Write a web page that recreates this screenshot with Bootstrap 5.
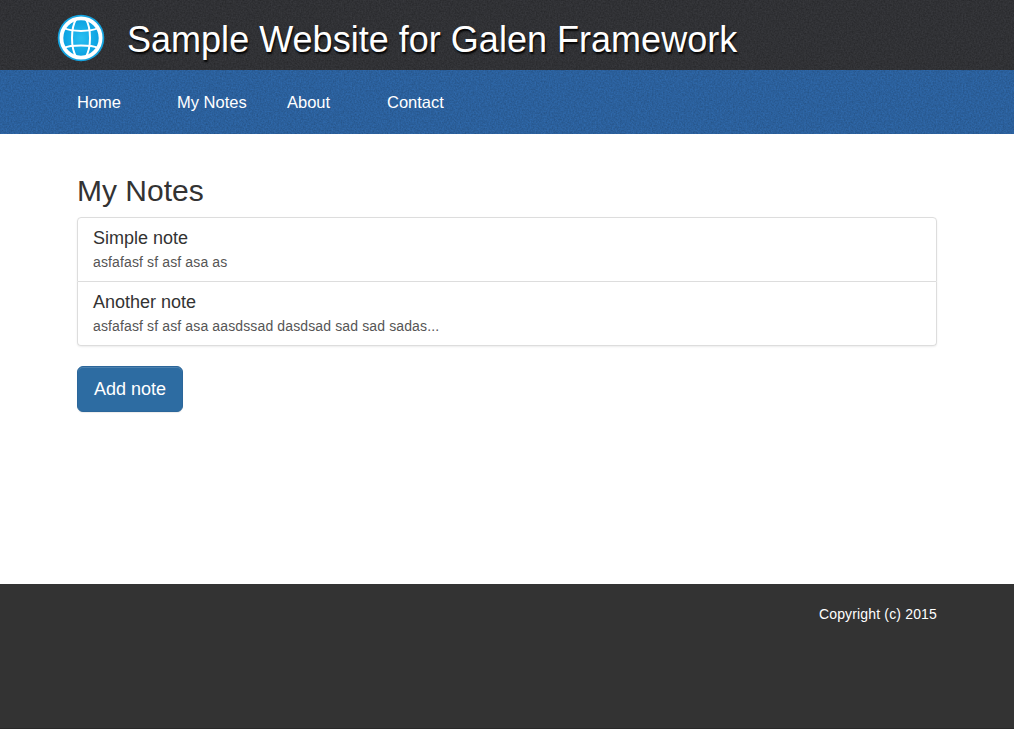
<!DOCTYPE html>
<html lang="en">
<head>
<meta charset="utf-8">
<meta name="viewport" content="width=device-width, initial-scale=1">
<title>Sample Website for Galen Framework</title>
<link href="https://cdn.jsdelivr.net/npm/bootstrap@5.3.0/dist/css/bootstrap.min.css" rel="stylesheet">
<style>
body{font-family:"Liberation Sans",Arial,sans-serif;font-size:14px;line-height:20px;color:#333;background:#fff}
.site-head{height:70px;background-color:#37383c}
.site-menu{height:64px;background-color:#2f68a9}
.grain{position:relative}
.grain>svg.noise{position:absolute;inset:0;width:100%;height:100%;pointer-events:none}
.grain>.inner{position:relative}
.inner{width:900px;margin:0 auto}
.site-head .inner{height:70px}
.logo{width:48px;height:48px;margin:14px 22px 0 0}
.site-title{font-size:36px;line-height:40px;letter-spacing:.02px;color:#fff;text-shadow:1px 2px 2px #000;margin:20px 0 0;font-weight:400;white-space:nowrap}
.site-menu .nav{padding:12px 10px 0}
.site-menu .nav-link{font-size:16.5px;line-height:20px;color:#fff;padding:10px;white-space:nowrap;min-width:100px}
.site-menu .nav-item:nth-child(2) .nav-link{min-width:110px}
.content{min-height:450px;padding:37px 20px 0}
.content h2{font-size:30px;line-height:40px;font-weight:400;margin:0 0 6px}
.notes{border-radius:4px;box-shadow:0 1px 2px rgba(0,0,0,.075)}
.notes .list-group-item{padding:10px 15px;border-color:#ddd;height:65px;color:#555}
.notes .list-group-item+.list-group-item{height:64px}
.notes h4{font-size:18px;line-height:20px;font-weight:400;color:#333;margin:0 0 4px}
.notes p{margin:0;letter-spacing:.13px}
.btn-add{font-size:18px;line-height:24px;padding:10px 16px;margin-top:20px;color:#fff;background:#2d6ca2;border:1px solid #2b669a;border-radius:6px;box-shadow:inset 0 1px 0 rgba(255,255,255,.15),0 1px 1px rgba(0,0,0,.075)}
.site-foot{height:145px;background:#333;color:#fff;border-bottom:1px solid #292929;letter-spacing:.16px}
.site-foot .inner{padding:20px 20px 0}
</style>
</head>
<body>
<header class="site-head grain">
  <svg class="noise" aria-hidden="true"><filter id="grain" x="0" y="0" width="100%" height="100%"><feTurbulence type="fractalNoise" baseFrequency=".63" numOctaves="3" seed="3"/><feColorMatrix values="0 0 0 0 0  0 0 0 0 0  0 0 0 0 0  1.5 0 0 0 -.35"/></filter><rect width="100%" height="100%" filter="url(#grain)" opacity=".28"/></svg>
  <div class="inner d-flex align-items-start">
    <svg class="logo flex-shrink-0" viewBox="0 0 48 48">
      <defs><radialGradient id="sea"><stop offset="0" stop-color="#2bc0f2"/><stop offset="1" stop-color="#099fe0"/></radialGradient></defs>
      <circle cx="24" cy="24" r="23.3" fill="#14a3df"/>
      <circle cx="24" cy="24" r="19.8" fill="url(#sea)"/>
      <g fill="none" stroke="#fff"><circle cx="24" cy="24" r="19.6" stroke-width="3.8"/>
      <g stroke-width="2"><path d="M19.500 4.500C13.500 14 13.500 34 19.500 43.500M28.500 4.500C34.500 14 34.500 34 28.500 43.500"/><path d="M7 14C14 17.900 34 17.900 41 14M7 34C14 30.800 34 30.800 41 34"/></g></g>
    </svg>
    <h1 class="site-title">Sample Website for Galen Framework</h1>
  </div>
</header>
<nav class="site-menu grain">
  <svg class="noise" aria-hidden="true"><rect width="100%" height="100%" filter="url(#grain)" opacity=".19"/></svg>
  <div class="inner">
    <ul class="nav">
      <li class="nav-item"><a class="nav-link" href="#">Home</a></li>
      <li class="nav-item"><a class="nav-link" href="#">My Notes</a></li>
      <li class="nav-item"><a class="nav-link" href="#">About</a></li>
      <li class="nav-item"><a class="nav-link" href="#">Contact</a></li>
    </ul>
  </div>
</nav>
<main class="inner content">
  <h2>My Notes</h2>
  <div class="list-group notes">
    <a class="list-group-item list-group-item-action" href="#"><h4>Simple note</h4><p>asfafasf sf asf asa as</p></a>
    <a class="list-group-item list-group-item-action" href="#"><h4>Another note</h4><p>asfafasf sf asf asa aasdssad dasdsad sad sad sadas...</p></a>
  </div>
  <button type="button" class="btn btn-add">Add note</button>
</main>
<footer class="site-foot"><div class="inner text-end">Copyright (c) 2015</div></footer>
<script src="https://cdn.jsdelivr.net/npm/bootstrap@5.3.0/dist/js/bootstrap.bundle.min.js"></script>
</body>
</html>
